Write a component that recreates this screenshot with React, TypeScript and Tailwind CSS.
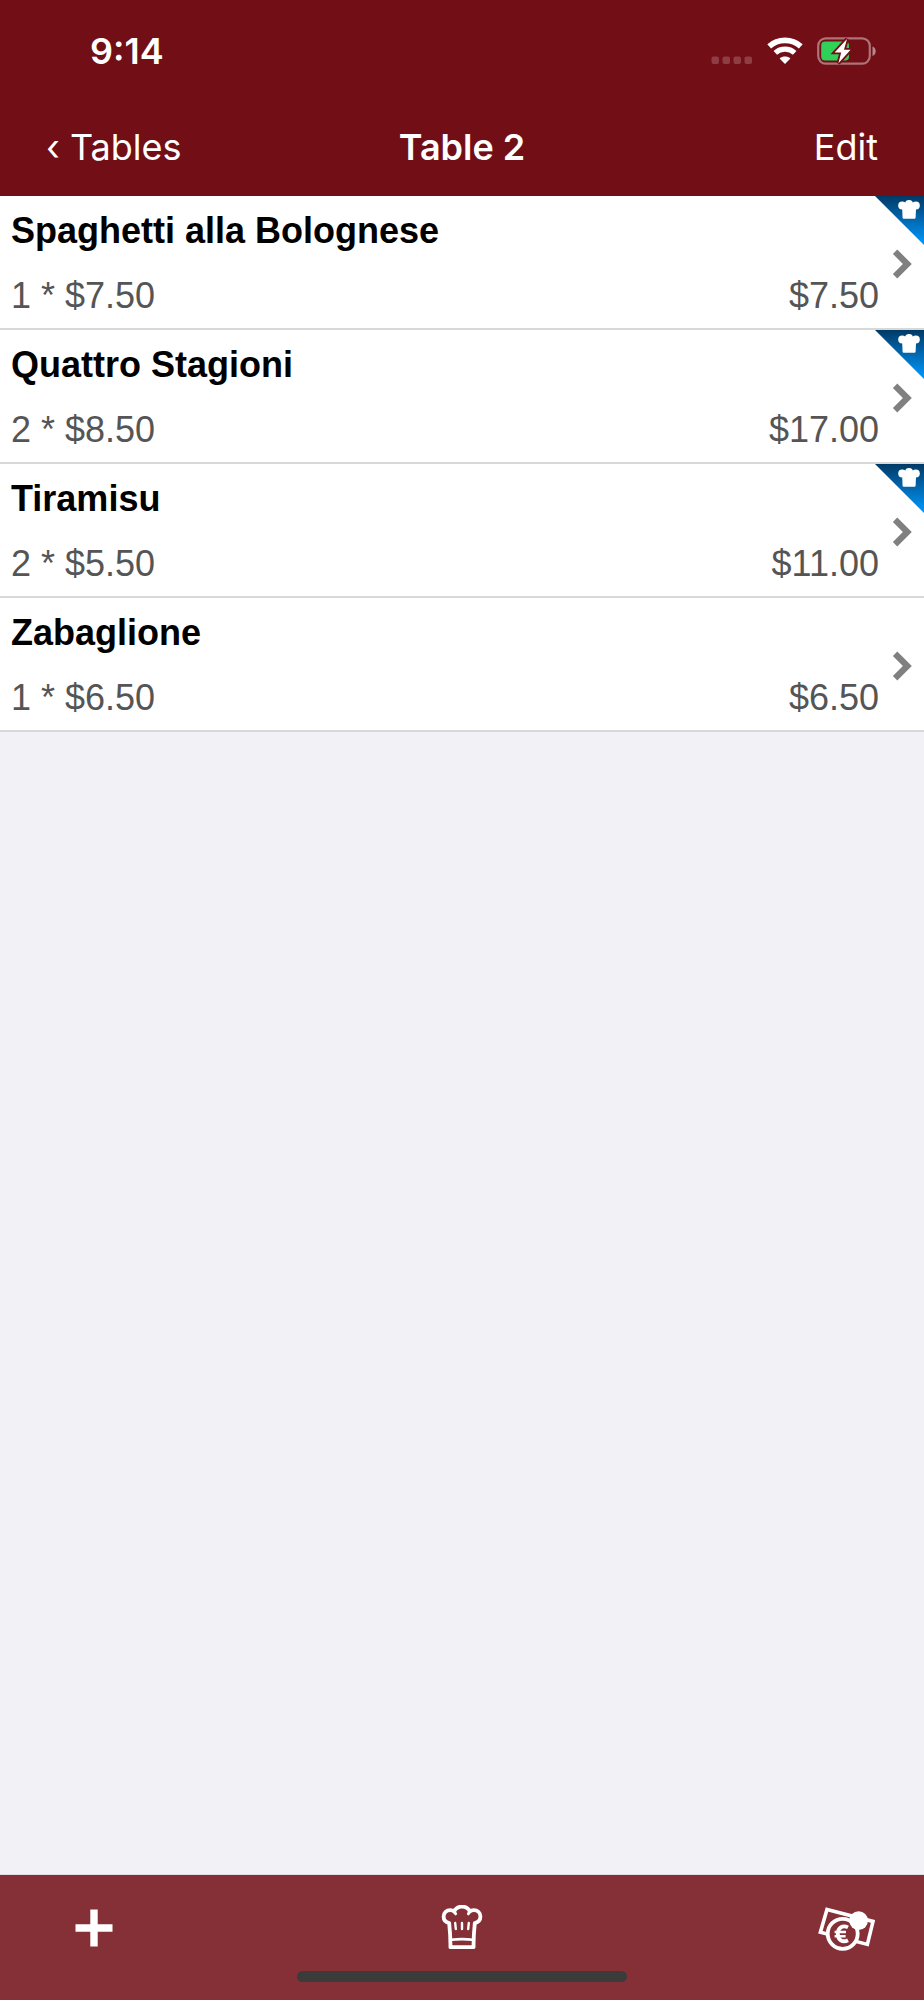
type OrderItem = {
  name: string;
  quantity: number;
  price: string;
  total: string;
  sent: boolean;
};

const items: OrderItem[] = [
  { name: 'Spaghetti alla Bolognese', quantity: 1, price: '$7.50', total: '$7.50', sent: true },
  { name: 'Quattro Stagioni', quantity: 2, price: '$8.50', total: '$17.00', sent: true },
  { name: 'Tiramisu', quantity: 2, price: '$5.50', total: '$11.00', sent: true },
  { name: 'Zabaglione', quantity: 1, price: '$6.50', total: '$6.50', sent: false },
];

function SignalDots() {
  return (
    <svg className="w-[42px] h-7" viewBox="0 0 42 28" fill="#fff" fillOpacity="0.2" aria-hidden="true">
      <rect x="0.5" y="19.5" width="7.5" height="7.5" rx="2" />
      <rect x="11.5" y="19.5" width="7.5" height="7.5" rx="2" />
      <rect x="22.5" y="19.5" width="7.5" height="7.5" rx="2" />
      <rect x="33.5" y="19.5" width="7.5" height="7.5" rx="2" />
    </svg>
  );
}

function WifiIcon() {
  return (
    <svg className="w-9 h-7" viewBox="0 0 36 28" fill="none" aria-hidden="true">
      <path d="M2.2 9.4C11 1.4 25 1.4 33.8 9.4" stroke="#fff" strokeWidth="5.6" />
      <path d="M8.3 15.8C13.8 10.8 22.2 10.8 27.7 15.8" stroke="#fff" strokeWidth="5.2" />
      <path d="M18 27L12.6 21.4C15.6 18.8 20.4 18.8 23.4 21.4Z" fill="#fff" />
    </svg>
  );
}

function BatteryIcon() {
  return (
    <svg className="w-[60px] h-7" viewBox="0 0 60 28" fill="none" aria-hidden="true">
      <rect x="1.2" y="1.4" width="51.6" height="25.2" rx="7.5" stroke="#fff" strokeOpacity="0.42" strokeWidth="2.2" />
      <path d="M55.5 9.5C57.6 10.2 58.7 12 58.7 14.2C58.7 16.4 57.6 18.2 55.5 18.9Z" fill="#fff" fillOpacity="0.5" />
      <rect x="4.2" y="4.6" width="27.8" height="19" rx="4" fill="#30d158" />
      <path
        d="M30 2L17.6 15.4H24.2L21.4 26.2L33.6 12.8H27Z"
        fill="#fff"
        stroke="#720e15"
        strokeWidth="3.6"
      />
      <path d="M30 2L17.6 15.4H24.2L21.4 26.2L33.6 12.8H27Z" fill="#fff" />
    </svg>
  );
}

function SentBadge() {
  return (
    <svg className="absolute top-0 right-0 w-[49px] h-[49px]" viewBox="0 0 49 49" role="img" aria-label="Sent to kitchen">
      <defs>
        <linearGradient id="sent" x1="0" y1="0" x2="0" y2="1">
          <stop offset="0" stopColor="#003a66" />
          <stop offset="1" stopColor="#0099ff" />
        </linearGradient>
      </defs>
      <path d="M0 0H49V49Z" fill="url(#sent)" />
      <g fill="#fff">
        <circle cx="27.2" cy="9.6" r="4" />
        <circle cx="34" cy="8" r="4" />
        <circle cx="40.8" cy="9.6" r="4" />
        <path d="M27 9H41.2L40.6 21.8Q40.5 22.8 39.5 22.8H28.7Q27.7 22.8 27.6 21.8Z" />
      </g>
    </svg>
  );
}

function ChevronIcon() {
  return (
    <svg className="w-5 h-[30px]" viewBox="0 0 20 30" aria-hidden="true">
      <path d="M5.3 0.5L19.8 15L5.3 29.5L0.9 25.1L10.9 15L0.9 4.9Z" fill="#808080" />
    </svg>
  );
}

function PlusIcon() {
  return (
    <svg className="w-[38px] h-[38px]" viewBox="0 0 38 38" fill="#fff" aria-hidden="true">
      <path d="M15.3 0.5H22.7V15.3H37.5V22.7H22.7V37.5H15.3V22.7H0.5V15.3H15.3Z" />
    </svg>
  );
}

function ChefHatIcon() {
  return (
    <svg className="w-[42px] h-[46px]" viewBox="0 0 42 46" fill="none" stroke="#fff" aria-hidden="true">
      <path
        d="M9.4 42.2C9.6 34 9.2 28 8.2 18.2C4.8 17.4 2.6 14.8 2.6 11.6C2.6 7.8 5.6 5.2 9.2 5.2C10.8 5.2 12.2 5.6 13.2 6.4C14.6 3.4 17.4 1.6 21 1.6C24.6 1.6 27.4 3.4 28.8 6.4C29.8 5.6 31.2 5.2 32.8 5.2C36.4 5.2 39.4 7.8 39.4 11.6C39.4 14.8 37.2 17.4 33.8 18.2C32.8 28 32.4 34 32.6 42.2Z"
        strokeWidth="3.8"
        strokeLinejoin="round"
      />
      <path d="M10 34.8Q21 33.4 32 34.8" strokeWidth="2.6" />
      <path d="M14.2 18L14.8 24M21 18V24M27.8 18L27.2 24" strokeWidth="2.4" strokeLinecap="round" />
      <path d="M13.2 6.6L14.6 8.8M28.8 6.6L27.4 8.8" strokeWidth="3" strokeLinecap="round" />
    </svg>
  );
}

function CashIcon() {
  return (
    <svg className="w-[58px] h-[46px]" viewBox="0 0 58 46" fill="none" stroke="#fff" aria-hidden="true">
      <path d="M10 4.4L56 16.4L50.4 39.4L3.4 27.2Z" strokeWidth="3.6" />
      <circle cx="25.7" cy="28.8" r="15" fill="#853037" strokeWidth="3.8" />
      <circle cx="41.6" cy="15.6" r="9.4" fill="#fff" stroke="none" />
      <path d="M31 22.4C25.4 19.6 20.8 23 20.8 28.8C20.8 34.8 25.4 38 31 35.2" strokeWidth="3.8" />
      <path d="M17.6 27H29M17.6 31.2H28.6" strokeWidth="2.6" />
    </svg>
  );
}

export default function App() {
  return (
    <div className="min-h-screen flex flex-col bg-[#f2f1f6] font-['Liberation_Sans',Arial,sans-serif]">
      <header className="bg-[#720e15] text-white font-[Inter,sans-serif]">
        <div className="h-[98px] flex items-center justify-between pl-[90px] pr-[47px] pt-1">
          <span className="text-[36px] leading-10 font-semibold">9:14</span>
          <div className="flex items-center gap-[14px]">
            <SignalDots />
            <WifiIcon />
            <BatteryIcon />
          </div>
        </div>
        <nav className="h-[98px] grid grid-cols-3 items-center px-[46px] text-[36px] leading-[44px]">
          <a href="#tables" className="justify-self-start">‹ Tables</a>
          <h1 className="justify-self-center font-semibold">Table 2</h1>
          <button type="button" className="justify-self-end">Edit</button>
        </nav>
      </header>

      <main className="flex-1">
        <ul>
          {items.map((item) => (
            <li key={item.name} className="relative bg-white border-b-2 border-[#d8d8d8]">
              <a href="#item" className="flex items-center pl-[11px] pr-3 pt-[3px]">
                <div className="flex-1 flex flex-col gap-[25px] py-3 text-[36px] leading-10">
                  <h2 className="font-bold text-black">{item.name}</h2>
                  <p className="flex justify-between text-[#555555]">
                    <span>{item.quantity} * {item.price}</span>
                    <span>{item.total}</span>
                  </p>
                </div>
                <span className="pl-[13px]">
                  <ChevronIcon />
                </span>
              </a>
              {item.sent && <SentBadge />}
            </li>
          ))}
        </ul>
      </main>

      <footer className="bg-[#853037] border-t border-[#e0dde2]">
        <div className="grid grid-cols-3 items-center px-[49px] pt-[30px]">
          <button type="button" aria-label="Add item" className="justify-self-start px-[26px]">
            <PlusIcon />
          </button>
          <button type="button" aria-label="Send to kitchen" className="justify-self-center">
            <ChefHatIcon />
          </button>
          <button type="button" aria-label="Pay" className="justify-self-end">
            <CashIcon />
          </button>
        </div>
        <div className="w-[330px] h-[11px] mx-auto mt-5 mb-[18px] rounded-full bg-[#3b3b3b]" />
      </footer>
    </div>
  );
}
